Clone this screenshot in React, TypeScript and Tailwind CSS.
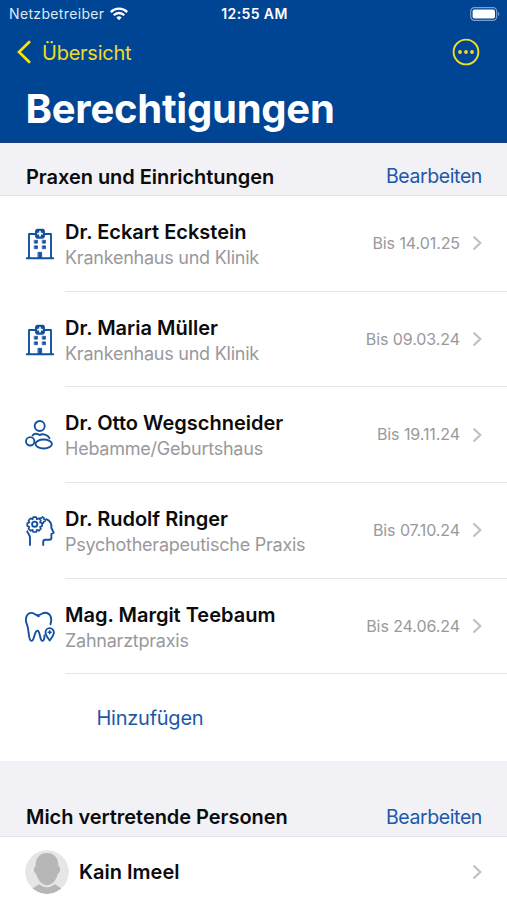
import type { ReactNode } from "react";

interface Permission {
    name: string;
    type: string;
    until: string;
    icon: ReactNode;
}

function LineIcon({ children }: { children: ReactNode }) {
    return (
        <svg
            viewBox="0 0 32 32"
            className="w-8 h-8 shrink-0 text-[#1450a0]"
            fill="none"
            stroke="currentColor"
            strokeWidth="1.9"
            strokeLinecap="round"
            strokeLinejoin="round"
        >
            {children}
        </svg>
    );
}

function HospitalIcon() {
    return (
        <LineIcon>
            <path d="M2.8 30.2h26.4M5 30V6h6.5M20.500 6H27V30" />
            <rect x="12" y="1.700" width="8" height="8" rx="1.500" fill="currentColor" />
            <path d="M16 3.600v4.200M13.900 5.700h4.200" stroke="#fff" strokeWidth="1.700" />
            <path d="M10.5 12.2h3v3h-3zM18.5 12.2h3v3h-3zM10.5 17.800h3v3h-3zM18.5 17.800h3v3h-3z" fill="currentColor" strokeWidth=".6" />
            <path d="M14.3 24.3h3.4V30h-3.4z" fill="currentColor" strokeWidth=".8" />
        </LineIcon>
    );
}

function MidwifeIcon() {
    return (
        <LineIcon>
            <circle cx="15.7" cy="7" r="5" />
            <circle cx="6.2" cy="22.3" r="4.2" />
            <ellipse cx="19.7" cy="25" rx="8.2" ry="4.5" />
            <path d="M8.6 16.5c1.600-2.300 4.800-2.200 7-.4 2.800-1.600 8.200-.8 9.900 3.100" />
        </LineIcon>
    );
}

function MindIcon() {
    return (
        <LineIcon>
            <circle cx="10.7" cy="9.2" r="2.6" />
            <path d="M9.2 2.200h3l.6 2.100 2-.9 2.100 2.100-.9 2 2.100.6v3l-2.100.6.9 2-2.100 2.100-2-.9-.6 2.100h-3l-.6-2.100-2 .9-2.100-2.100.9-2-2.100-.6v-3l2.100-.6-.9-2 2.100-2.100 2 .9z" strokeWidth="1.700" />
            <path d="M16 3l1.600.3.8-1.400 1.500.7-.1 1.600 1.600.7-.4 1.600-1.500.3-.1 1.500-1.300.2" strokeWidth="1.500" />
            <path d="M3.2 16.300c.6 2.300 2.800 3.500 2.800 6.500V30M22.200 4.200c3.700 1.500 5.600 4.600 5.200 8.800l2.300 4.700-2.300 1.300v3.700q0 2-2 2h-4q-2.200 0-2.200 2.200V30" />
        </LineIcon>
    );
}

function ToothIcon() {
    return (
        <LineIcon>
            <path d="M20.400 24.500c.2 2.800-.5 5.400-2 5.400-2.800 0-2-10.100-5-10.100-3.300 0-3 10.100-5.800 10.100-3.600 0-2.400-10.700-4.200-15.100C2 11.500 1.300 8.600 2.400 5.600 3.700 2 7.300 1 10.200 2.700l4.600 2.600M12.500 4.200c2.100.2 3.800-.4 5.500-1.400 3.300-2 7-.8 8.500 2.300 1.200 2.500.8 5.200 0 8.200" />
            <path d="M25.700 29.500c-2.400-3-4.200-5.400-4.200-8.200a4.200 4.200 0 0 1 8.400 0c0 2.800-1.800 5.200-4.200 8.200z" />
            <path d="M25.700 19.800v3M24.200 21.300h3" strokeWidth="1.500" />
        </LineIcon>
    );
}

function Chevron() {
    return (
        <svg viewBox="0 0 10 16" className="w-[10px] h-4 shrink-0" fill="none" stroke="#c2c2c5" strokeWidth="2.3">
            <path d="M1.500 1.500 8.300 8l-6.800 6.500" />
        </svg>
    );
}

function SectionHeader({ title }: { title: string }) {
    return (
        <div className="flex items-center justify-between pl-[26px] pr-[25px] h-[41px] text-[20px]">
            <h2 className="font-semibold tracking-[-0.04px]">{title}</h2>
            <button className="pt-px text-[19.5px] text-[#1c58a8] tracking-[-0.4px]">Bearbeiten</button>
        </div>
    );
}

const permissions: Permission[] = [
    { name: "Dr. Eckart Eckstein", type: "Krankenhaus und Klinik", until: "14.01.25", icon: <HospitalIcon /> },
    { name: "Dr. Maria Müller", type: "Krankenhaus und Klinik", until: "09.03.24", icon: <HospitalIcon /> },
    { name: "Dr. Otto Wegschneider", type: "Hebamme/Geburtshaus", until: "19.11.24", icon: <MidwifeIcon /> },
    { name: "Dr. Rudolf Ringer", type: "Psychotherapeutische Praxis", until: "07.10.24", icon: <MindIcon /> },
    { name: "Mag. Margit Teebaum", type: "Zahnarztpraxis", until: "24.06.24", icon: <ToothIcon /> },
];

export default function App() {
    return (
        <div className="w-[507px] h-[900px] overflow-hidden bg-white text-[#0b0b0c] font-['Inter',sans-serif] whitespace-nowrap">
            <header className="h-[143px] bg-[#004494] border-b border-[#1d3f80]">
                <div className="grid grid-cols-3 items-center h-7 pl-[9px] pr-[7px] text-[14px] leading-none text-white">
                    <div className="flex items-center gap-[6px] text-[#dfe8f5]">
                        <span className="tracking-[0.35px]">Netzbetreiber</span>
                        <svg viewBox="0 0 18 14" className="w-[18px] h-[14px] -mt-px" fill="none" stroke="#fff" strokeWidth="2.3">
                            <path d="M.8 5.100a11.600 11.600 0 0 1 16.400 0M3.700 8.200a7.500 7.500 0 0 1 10.600 0" />
                            <path d="M9 13.200 6.300 10.500a3.900 3.900 0 0 1 5.400 0z" fill="#fff" stroke="none" />
                        </svg>
                    </div>
                    <span className="text-center font-semibold tracking-[0.4px]">12:55 AM</span>
                    <svg viewBox="0 0 30 14" className="w-[30px] h-[14px] -mt-px justify-self-end">
                        <rect x=".7" y=".7" width="26" height="12.600" rx="3.700" fill="none" stroke="#7d9fce" strokeWidth="1.200" />
                        <rect x="2.600" y="2.500" width="22.400" height="9" rx="2" fill="#fff" />
                        <path d="M28.200 4.800c1.600.7 1.600 3.700 0 4.400z" fill="#7d9fce" />
                    </svg>
                </div>
                <div className="flex items-center justify-between h-12 pl-[17px] pr-[27px] text-[#f0dc28]">
                    <button className="flex items-center gap-[11px] text-[20px]">
                        <svg viewBox="0 0 14 24" className="w-[14px] h-6" fill="none" stroke="#fce300" strokeWidth="2.700">
                            <path d="M13 1.200 2 12l11 10.800" />
                        </svg>
                        <span className="pt-px tracking-[-0.25px]">Übersicht</span>
                    </button>
                    <svg viewBox="0 0 28 28" className="w-7 h-7" fill="currentColor">
                        <circle cx="14" cy="14" r="12.400" fill="none" stroke="currentColor" strokeWidth="1.900" />
                        <circle cx="8" cy="14" r="1.900" />
                        <circle cx="14" cy="14" r="1.900" />
                        <circle cx="20" cy="14" r="1.900" />
                    </svg>
                </div>
                <h1 className="pl-[25.500px] pt-2 text-[40px] leading-[50px] font-bold tracking-[-0.24px] text-white">Berechtigungen</h1>
            </header>

            <section className="h-[53px] pt-[13px] bg-[#f1f1f6] border-b border-[#e2e2e6]">
                <SectionHeader title="Praxen und Einrichtungen" />
            </section>

            <ul>
                {permissions.map((p) => (
                    <li key={p.name} className="flex items-center h-[95.7px] pl-6">
                        {p.icon}
                        <div className="flex flex-1 items-center h-full ml-[9px] pr-[25px] border-b border-[#e6e6e8]">
                            <div className="flex-1 pt-[3px]">
                                <div className="text-[20px] leading-[26px] font-semibold">{p.name}</div>
                                <div className="text-[18px] leading-[26px] tracking-[-0.24px] text-[#99999c]">{p.type}</div>
                            </div>
                            <span className="mr-3 mb-px text-[16px] tracking-[-0.08px] text-[#99999c]">Bis {p.until}</span>
                            <Chevron />
                        </div>
                    </li>
                ))}
            </ul>

            <button className="flex items-center w-full h-[86.5px] pt-px pl-[96.500px] text-[20px] tracking-[-0.25px] text-[#1c58a8]">Hinzufügen</button>

            <section className="h-[76px] pt-9 bg-[#f1f1f6] border-b border-[#e2e2e6]">
                <SectionHeader title="Mich vertretende Personen" />
            </section>

            <div className="flex items-center h-[71px] pl-[25px] pr-[25px]">
                <svg viewBox="0 0 44 44" className="w-11 h-11 rounded-full">
                    <circle cx="22" cy="22" r="22" fill="#e6e6e6" />
                    <path d="M22 3c7 0 11.500 4.500 11.500 13.500 2.300 0 2.200 6.500-.7 7.300C31.300 30.500 27 35.200 22 35.200s-9.300-4.700-10.800-11.400C8.300 23 8.200 16.500 10.500 16.500 10.500 7.500 15 3 22 3z" fill="#b7b7b7" />
                    <path d="M7.500 38.500 14 34.300q8 6 16 0l6.500 4.200Q30 44 22 44T7.500 38.500z" fill="#b7b7b7" />
                </svg>
                <span className="flex-1 ml-[10px] text-[20px] font-semibold">Kain Imeel</span>
                <Chevron />
            </div>
        </div>
    );
}
